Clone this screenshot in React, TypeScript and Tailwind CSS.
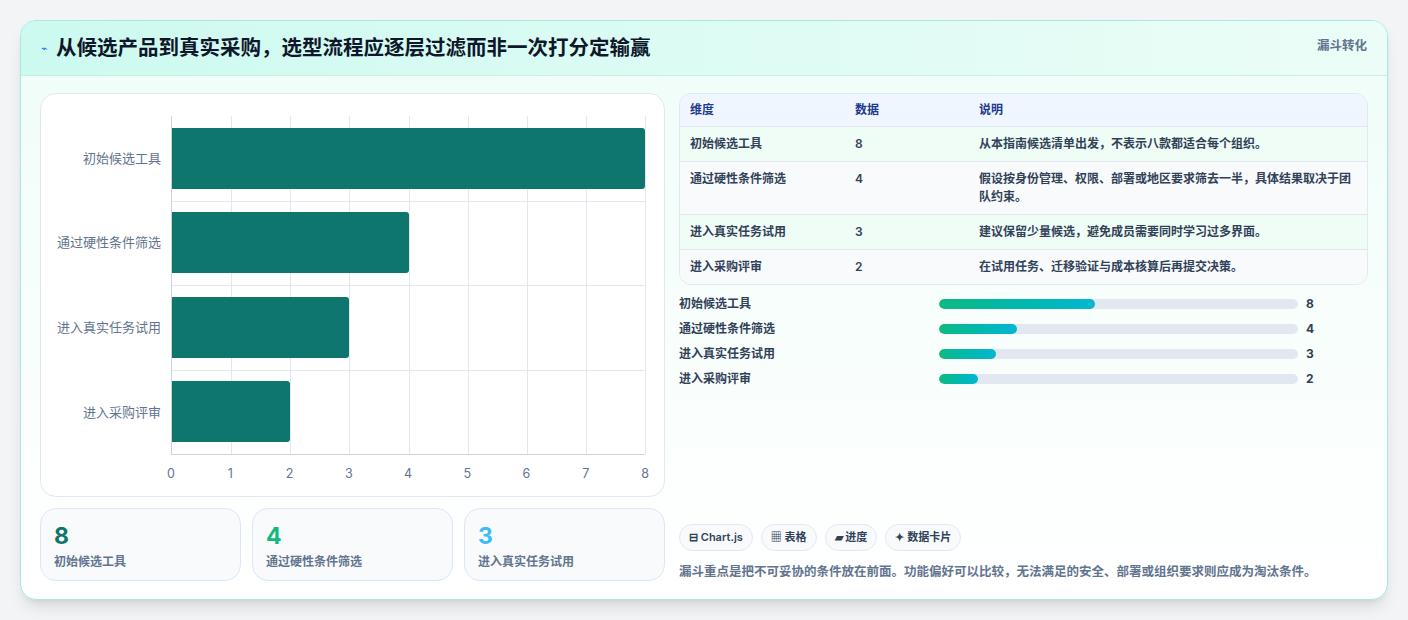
const font = { fontFamily: '"Inter", "Noto Sans CJK SC", sans-serif' };

const rows = [
  { name: "初始候选工具", value: 8, note: "从本指南候选清单出发，不表示八款都适合每个组织。", pct: "43.5%" },
  { name: "通过硬性条件筛选", value: 4, note: "假设按身份管理、权限、部署或地区要求筛去一半，具体结果取决于团队约束。", pct: "21.7%" },
  { name: "进入真实任务试用", value: 3, note: "建议保留少量候选，避免成员需要同时学习过多界面。", pct: "15.9%" },
  { name: "进入采购评审", value: 2, note: "在试用任务、迁移验证与成本核算后再提交决策。", pct: "10.9%" },
];

const BarChart = () => {
  const ticks = [0, 1, 2, 3, 4, 5, 6, 7, 8];
  return (
    <div className="h-[404px] rounded-2xl border border-slate-200 bg-white pt-[22px] pl-[10px] pr-[19px] flex flex-col">
      <div className="flex h-[339px]">
        <div className="w-[120px] flex flex-col text-[13px] text-slate-500">
          {rows.map((r) => (
            <div key={r.name} className="flex-1 flex items-center justify-end pr-[10px]">
              {r.name}
            </div>
          ))}
        </div>
        <div className="flex-1 relative border-l border-b border-slate-300">
          {ticks.slice(1).map((t) => (
            <div key={t} className="absolute top-0 bottom-0 w-px bg-slate-200" style={{ left: `${(t / 8) * 100}%` }} />
          ))}
          {[1, 2, 3].map((i) => (
            <div key={i} className="absolute left-0 right-0 h-px bg-slate-200" style={{ top: `${i * 25}%` }} />
          ))}
          <div className="absolute inset-0 flex flex-col">
            {rows.map((r) => (
              <div key={r.name} className="flex-1 flex items-center">
                <div className="h-[61px] bg-[#0f766e] rounded-r-[3px]" style={{ width: `${(r.value / 8) * 100}%` }} />
              </div>
            ))}
          </div>
        </div>
      </div>
      <div className="flex ml-[120px] relative h-[30px] text-[12.5px] text-slate-500">
        {ticks.map((t) => (
          <span key={t} className="absolute top-[10px] -translate-x-1/2" style={{ left: `${(t / 8) * 100}%` }}>
            {t}
          </span>
        ))}
      </div>
    </div>
  );
};

export default function App() {
  const stats = [
    { v: 8, label: "初始候选工具", color: "text-[#0f766e]" },
    { v: 4, label: "通过硬性条件筛选", color: "text-[#10b981]" },
    { v: 3, label: "进入真实任务试用", color: "text-[#38bdf8]" },
  ];
  return (
    <div className="min-h-[620px] bg-[#f3f4f6] pt-[20px] px-[20px]" style={font}>
      <div className="h-[580px] rounded-2xl border border-[#a5e9df] bg-gradient-to-b from-[#effdf8] to-white shadow-lg overflow-hidden flex flex-col">
        <div className="h-[55px] shrink-0 bg-gradient-to-r from-[#ccfaf0] to-[#ecfdf7] border-b border-[#c9f0e6] flex items-center justify-between px-[20px]">
          <div className="flex items-center gap-2">
            <span className="text-[11px] text-[#2563eb]">⌁</span>
            <h1 className="text-[20.5px] font-bold text-slate-900">从候选产品到真实采购，选型流程应逐层过滤而非一次打分定输赢</h1>
          </div>
          <span className="text-[12.5px] font-bold text-slate-500 self-start mt-[16px]">漏斗转化</span>
        </div>
        <div className="flex gap-[14px] px-[19px] pt-[17px]">
          <div className="w-[625px] flex flex-col gap-[11px]">
            <BarChart />
            <div className="grid grid-cols-3 gap-[11px]">
              {stats.map((s) => (
                <div key={s.label} className="h-[73px] rounded-2xl border border-[#dbe7f5] bg-[#f8fafc] px-[13px] pt-[12px]">
                  <div className={`text-[23px] leading-[30px] font-bold ${s.color}`}>{s.v}</div>
                  <div className="text-[12px] font-semibold text-slate-500 mt-[2px]">{s.label}</div>
                </div>
              ))}
            </div>
          </div>
          <div className="flex-1 flex flex-col">
            <div className="rounded-xl border border-slate-200 overflow-hidden text-[12px] text-slate-700 font-semibold">
              <div className="flex h-[33px] items-center bg-[#eff6ff] border-b border-slate-200 text-[#1e3a8a]">
                <div className="w-[175px] pl-[10px]">维度</div>
                <div className="w-[124px]">数据</div>
                <div className="flex-1">说明</div>
              </div>
              {rows.map((r, i) => (
                <div key={r.name} className={`flex py-[8px] leading-[18px] ${i < 3 ? "border-b border-slate-200" : ""} ${i % 2 === 0 ? "bg-[#f0fdf6]" : "bg-[#f8fafc]"}`}>
                  <div className="w-[175px] pl-[10px]">{r.name}</div>
                  <div className="w-[124px]">{r.value}</div>
                  <div className="flex-1 pr-[10px]">{r.note}</div>
                </div>
              ))}
            </div>
            <div className="flex flex-col gap-[7px] mt-[10px]">
              {rows.map((r) => (
                <div key={r.name} className="flex items-center h-[18px] text-[12px] font-semibold text-slate-700">
                  <div className="w-[260px]">{r.name}</div>
                  <div className="w-[359px] h-[10px] rounded-full bg-[#e2e8f0] overflow-hidden">
                    <div className="h-full rounded-full bg-gradient-to-r from-[#10b981] to-[#06b6d4]" style={{ width: r.pct }} />
                  </div>
                  <div className="ml-[8px] font-bold">{r.value}</div>
                </div>
              ))}
            </div>
            <div className="flex gap-[8px] mt-[136px]">
              {["⊟ Chart.js", "▦ 表格", "▰ 进度", "✦ 数据卡片"].map((c) => (
                <span key={c} className="h-[27px] px-[9px] rounded-full border border-slate-200 bg-[#f8fafc] flex items-center text-[11px] font-semibold text-slate-700">
                  {c}
                </span>
              ))}
            </div>
            <p className="mt-[12px] text-[12.5px] font-semibold text-slate-500">
              漏斗重点是把不可妥协的条件放在前面。功能偏好可以比较，无法满足的安全、部署或组织要求则应成为淘汰条件。
            </p>
          </div>
        </div>
      </div>
    </div>
  );
}
